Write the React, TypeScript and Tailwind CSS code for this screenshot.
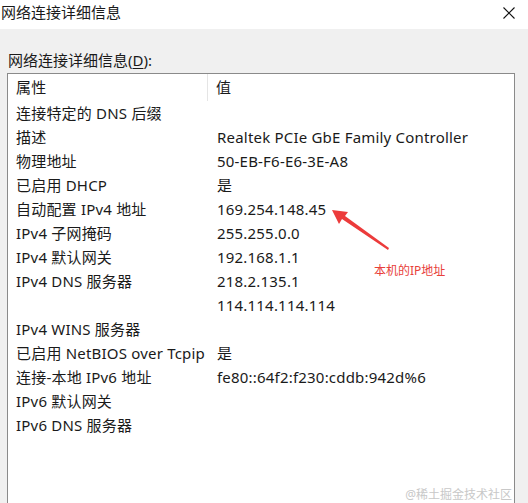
const rows: [string, string][] = [
  ['连接特定的 DNS 后缀', ''],
  ['描述', 'Realtek PCIe GbE Family Controller'],
  ['物理地址', '50-EB-F6-E6-3E-A8'],
  ['已启用 DHCP', '是'],
  ['自动配置 IPv4 地址', '169.254.148.45'],
  ['IPv4 子网掩码', '255.255.0.0'],
  ['IPv4 默认网关', '192.168.1.1'],
  ['IPv4 DNS 服务器', '218.2.135.1'],
  ['', '114.114.114.114'],
  ['IPv4 WINS 服务器', ''],
  ['已启用 NetBIOS over Tcpip', '是'],
  ['连接-本地 IPv6 地址', 'fe80::64f2:f230:cddb:942d%6'],
  ['IPv6 默认网关', ''],
  ['IPv6 DNS 服务器', ''],
];

const font = { fontFamily: '"Noto Sans", "Noto Sans CJK SC", sans-serif' };

export default function App() {
  return (
    <div className="w-[528px] h-[503px] overflow-hidden bg-[#f0f0f0] text-[15px] text-[#1a1a1a]" style={font}>
      {/* title bar */}
      <div className="h-[29px] bg-white flex items-center justify-between pr-[13px]">
        <span className="pl-[1px] leading-none -mt-[4px]">网络连接详细信息</span>
        <svg width="12" height="12" viewBox="0 0 12 12" className="-mt-[4px]">
          <path d="M0.5 0.5L11.5 11.5M11.5 0.5L0.5 11.5" stroke="#111" strokeWidth="1.1" />
        </svg>
      </div>

      <div className="pl-[7px] pr-[13px] pt-[19px]">
        <div className="pl-[1px] h-[25px] leading-[25px]">
          网络连接详细信息(<span className="underline underline-offset-2">D</span>):
        </div>

        <div className="relative h-[440px] bg-white border border-[#8a8a8a] border-b-0 tracking-[0.2px]">
          {/* header */}
          <div className="flex h-[27px] items-center">
            <div className="w-[200px] pl-[8px] border-r border-[#e5e5e5] h-full flex items-center">属性</div>
            <div className="pl-[8px]">值</div>
          </div>

          {rows.map(([k, v], i) => (
            <div key={i} className="flex h-[24px] items-center whitespace-nowrap">
              <div className="w-[201px] pl-[8px]">{k}</div>
              <div className="pl-[8px]">{v}</div>
            </div>
          ))}

          {/* annotation arrow */}
          <svg className="absolute left-[318px] top-[130px]" width="70" height="50" viewBox="0 0 70 50">
            <polygon points="6,6 22,8 19,12 63,44 62,46 16,15 13,20" fill="#ec3b3b" />
          </svg>
          <span className="absolute left-[366px] top-[188px] text-[12px] tracking-normal text-[#e8403a] whitespace-nowrap">
            本机的IP地址
          </span>

          <span className="absolute right-[2px] bottom-[9px] text-[12px] tracking-normal text-[#c8c8c8] whitespace-nowrap">
            @稀土掘金技术社区
          </span>
        </div>
      </div>
    </div>
  );
}
